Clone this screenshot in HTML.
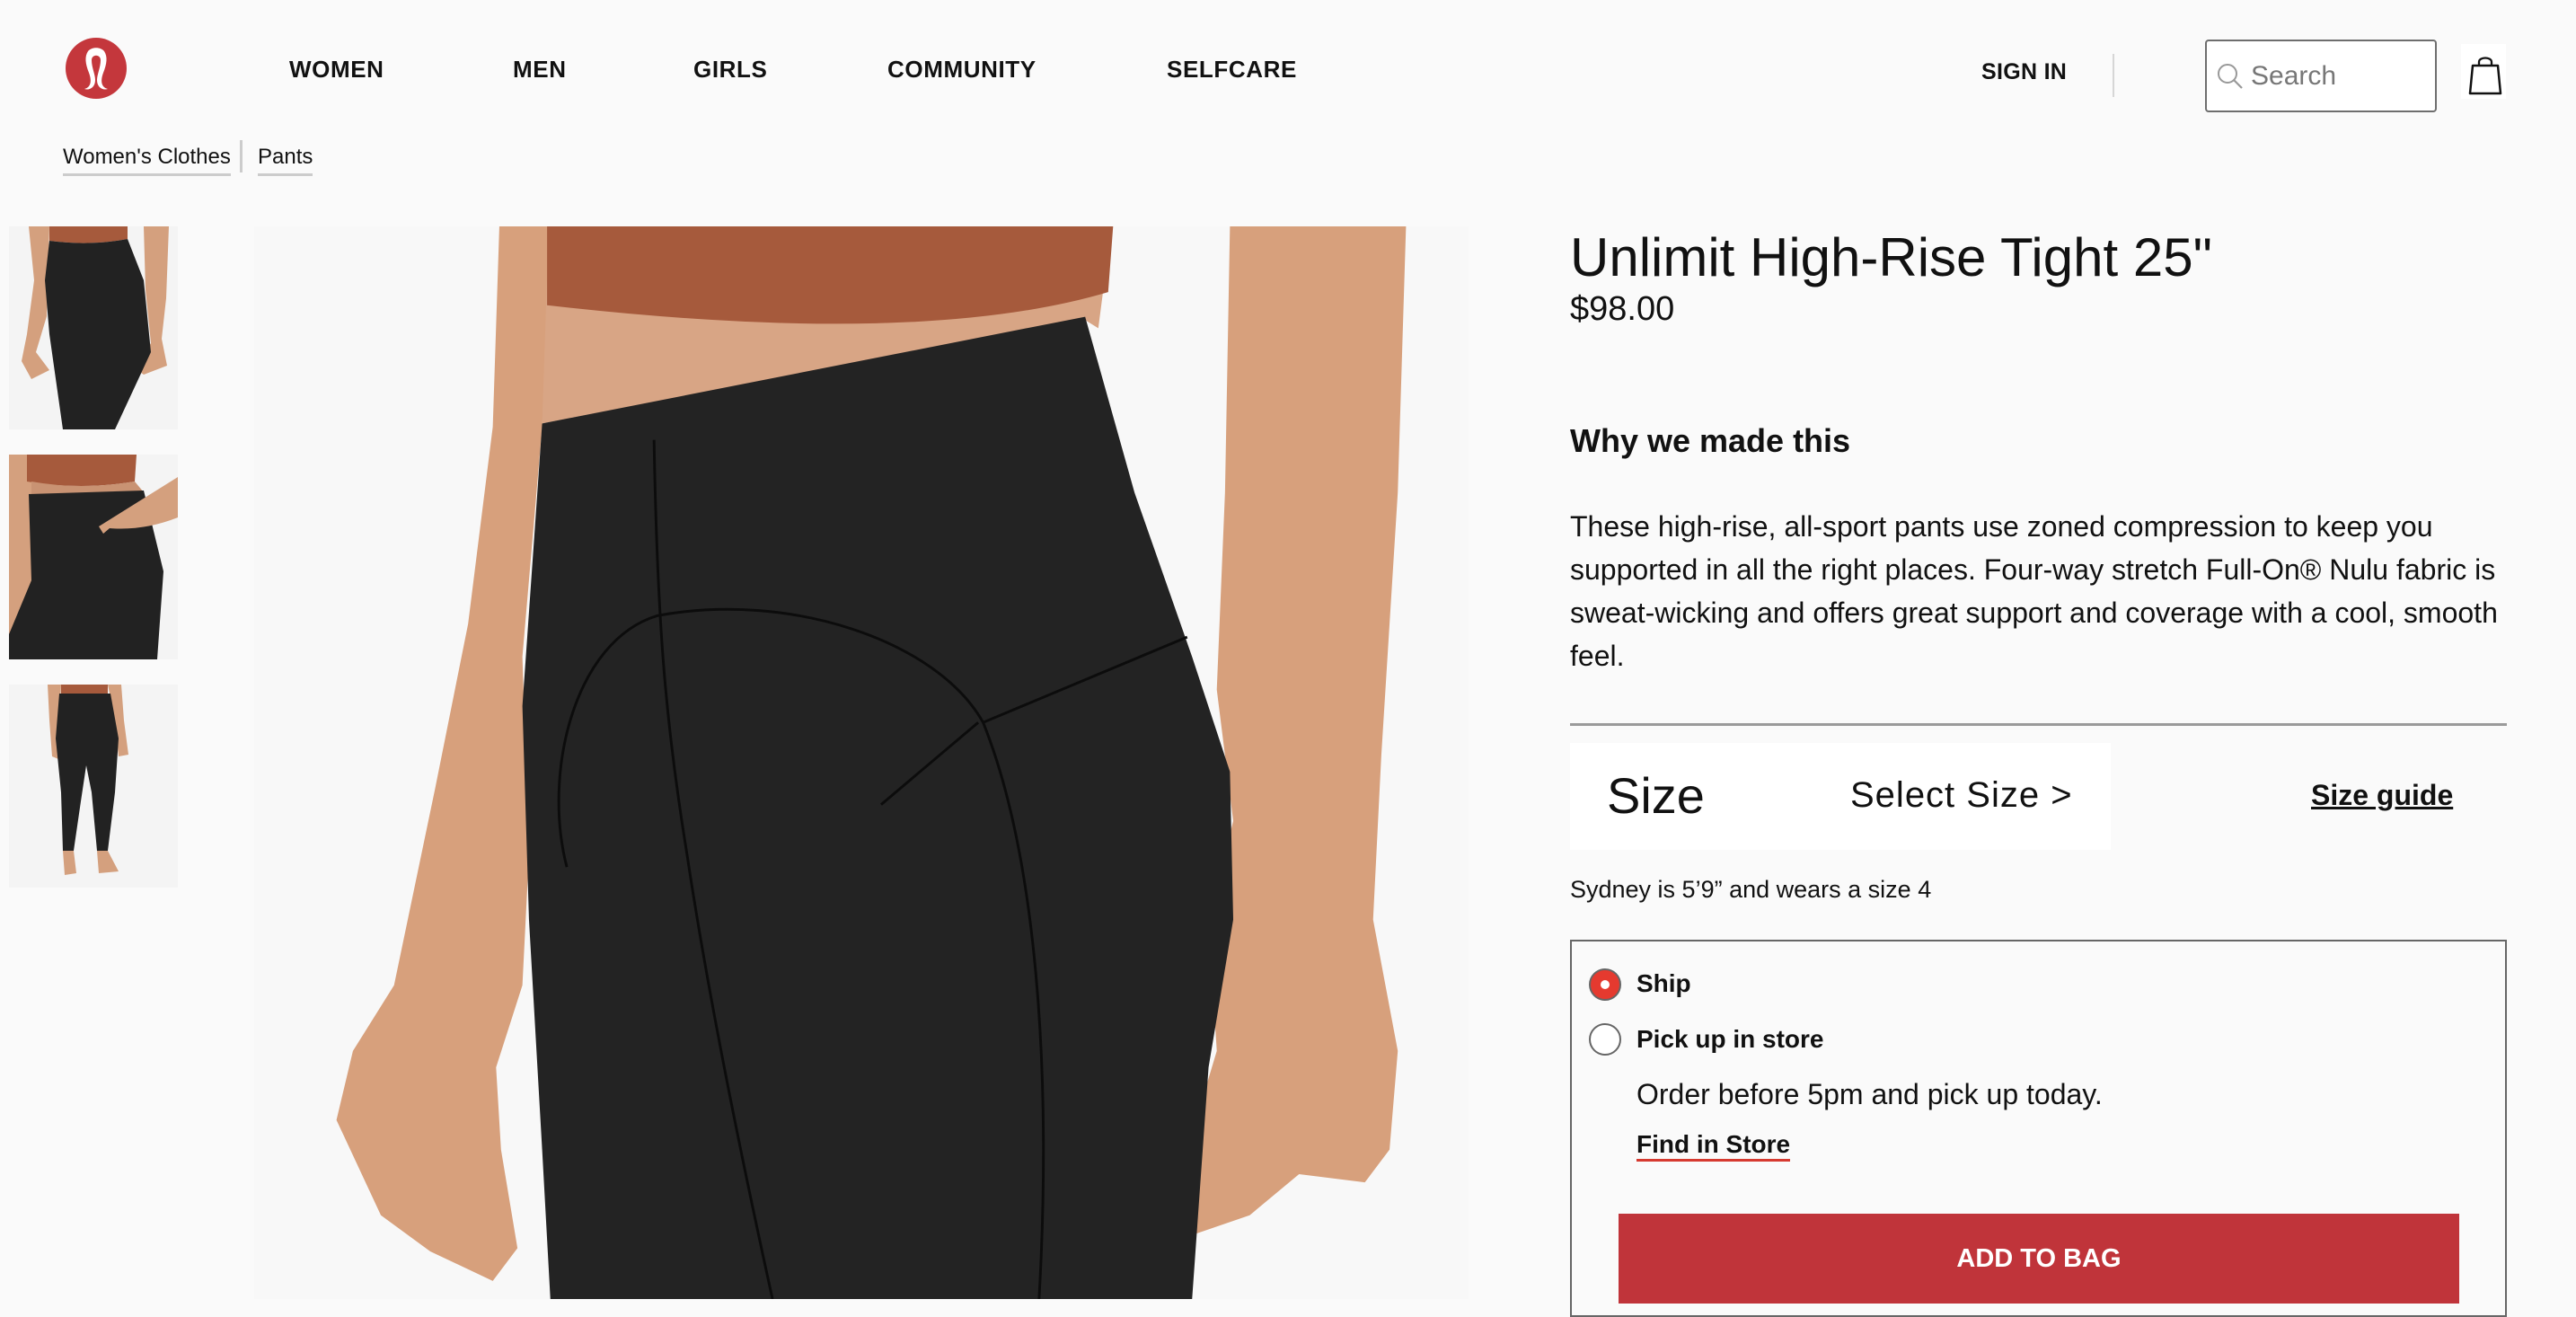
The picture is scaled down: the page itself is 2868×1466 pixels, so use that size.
<!DOCTYPE html>
<html><head><meta charset="utf-8">
<style>
*{margin:0;padding:0;box-sizing:border-box}
html,body{width:2868px;height:1446px;overflow:hidden;background:#fafafa;font-family:"Liberation Sans",Arial,sans-serif;color:#111}
.a{position:absolute;white-space:nowrap;line-height:1}
.nav{font-weight:bold;font-size:26px;letter-spacing:0.6px;top:64px}
.bc{font-size:24px;top:163px;padding-bottom:6px;border-bottom:3px solid #ccc}
</style></head><body>

<svg class="a" style="left:72px;top:41px" width="70" height="70" viewBox="0 0 70 70">
<ellipse cx="35" cy="35" rx="34" ry="34" fill="#c4373c"/>
<path d="M22 58 C30 56 30 48 27 40 C23 30 22 22 26 16 C30 11 40 11 44 16 C48 22 47 30 43 40 C40 48 40 56 48 58 C42 60 36 56 36 48 C36 42 40 34 40 26 C40 19 30 19 30 26 C30 34 34 42 34 48 C34 56 28 60 22 58 Z" fill="#fff"/>
</svg>

<div class="a nav" style="left:322px">WOMEN</div>
<div class="a nav" style="left:571px">MEN</div>
<div class="a nav" style="left:772px">GIRLS</div>
<div class="a nav" style="left:988px">COMMUNITY</div>
<div class="a nav" style="left:1299px">SELFCARE</div>

<div class="a nav" style="left:2206px;top:68px;font-size:25px;letter-spacing:0.3px">SIGN IN</div>
<div class="a" style="left:2352px;top:60px;width:2px;height:48px;background:#d6d6d6"></div>
<div class="a" style="left:2455px;top:44px;width:258px;height:81px;border:2px solid #6e6e6e;border-radius:4px;background:#fff"></div>
<svg class="a" style="left:2466px;top:68px" width="36" height="36" viewBox="0 0 36 36"><circle cx="14" cy="14" r="10" fill="none" stroke="#999" stroke-width="2"/><path d="M21 21 L30 30" stroke="#999" stroke-width="2.2"/></svg>
<div class="a" style="left:2506px;top:70px;font-size:30px;color:#777">Search</div>
<div class="a" style="left:2740px;top:49px;width:50px;height:61px;background:#fff"></div>
<svg class="a" style="left:2745px;top:60px" width="44" height="48" viewBox="0 0 44 48"><path d="M8 13 L36 13 L39 44 L5 44 Z" fill="none" stroke="#111" stroke-width="2.5" stroke-linejoin="round"/><path d="M15 13 V9 C15 3 29 3 29 9 V13" fill="none" stroke="#111" stroke-width="2.3"/></svg>

<div class="a bc" style="left:70px">Women's Clothes</div>
<div class="a" style="left:267px;top:156px;width:3px;height:36px;background:#ccc"></div>
<div class="a bc" style="left:287px">Pants</div>

<svg class="a" style="left:10px;top:252px" width="188" height="226" viewBox="0 0 188 226">
<rect width="188" height="226" fill="#f4f4f4"/>
<path d="M22 0 H45 L42 100 L30 140 L45 160 L25 170 L14 150 L20 120 L28 60 Z" fill="#d4a07e"/>
<path d="M150 0 H178 L175 80 L170 125 L176 155 L150 165 L140 158 L158 130 L152 70 Z" fill="#d4a07e"/>
<path d="M45 0 H132 L132 14 Q90 22 45 16 Z" fill="#a65a3c"/>
<path d="M45 16 Q90 22 132 14 L150 60 L158 140 L118 226 H60 L45 120 L40 60 Z" fill="#222"/>
</svg>
<svg class="a" style="left:10px;top:506px" width="188" height="228" viewBox="0 0 188 228">
<rect width="188" height="228" fill="#f4f4f4"/>
<path d="M0 0 H25 L30 150 L20 190 L0 200 Z" fill="#d4a07e"/>
<path d="M20 0 H142 L140 30 Q80 40 20 30 Z" fill="#a65a3c"/>
<path d="M25 30 Q80 40 140 30 L150 42 L25 45 Z" fill="#c99373"/>
<path d="M22 44 L150 40 L172 130 L165 228 H0 V200 L25 140 Z" fill="#222"/>
<path d="M100 80 Q140 55 188 25 V70 Q150 85 112 82 L105 88 Z" fill="#d4a07e"/>
</svg>
<svg class="a" style="left:10px;top:762px" width="188" height="226" viewBox="0 0 188 226">
<rect width="188" height="226" fill="#f4f4f4"/>
<path d="M43 0 H58 L55 70 L60 85 L48 80 L45 40 Z" fill="#d4a07e"/>
<path d="M110 0 H125 L128 40 L133 78 L122 80 L118 40 Z" fill="#d4a07e"/>
<path d="M58 0 H110 V10 H58 Z" fill="#a65a3c"/>
<path d="M56 10 H113 L122 60 L118 120 L110 185 L98 185 L92 120 L86 90 L80 130 L72 185 L60 185 L58 120 L52 60 Z" fill="#222"/>
<path d="M60 185 H72 L75 210 L62 212 Z M98 185 H110 L122 208 L100 210 Z" fill="#d4a07e"/>
</svg>

<svg class="a" style="left:283px;top:252px" width="1352" height="1194" viewBox="155 138 738 653" preserveAspectRatio="none">
<rect x="155" y="138" width="738" height="653" fill="#f8f8f8"/>
<path d="M304 138 L336 138 L330 260 L318 400 L322 520 L318 600 L302 650 L305 700 L315 760 L300 780 L262 762 L232 740 L205 682 L215 640 L240 600 L265 480 L285 380 L300 260 Z" fill="#d7a07c"/>
<path d="M748 138 L855 138 L850 300 L840 460 L835 560 L850 640 L845 700 L830 720 L790 715 L760 740 L725 752 L700 750 L722 700 L740 640 L735 560 L750 500 L740 420 L745 300 Z" fill="#d7a07c"/>
<path d="M334 138 L676 138 L668 200 L660 195 L330 258 Z" fill="#d8a585"/>
<path d="M333 138 L677 138 L674 178 Q560 212 333 186 Z" fill="#a65a3c"/>
<path d="M330 258 L660 193 L690 300 L725 400 L748 470 L750 560 L735 650 L725 791 L335 791 L330 700 L322 560 L318 430 L325 330 Z" fill="#232323"/>
<g fill="none" stroke="#0c0c0c" stroke-width="1.6">
<path d="M398 268 C400 380 405 440 418 520 C430 600 450 700 470 791"/>
<path d="M345 528 C330 470 350 390 400 375 C480 360 570 390 598 440"/>
<path d="M598 440 L722 388"/>
<path d="M598 440 C630 520 640 650 632 791"/>
<path d="M536 490 L595 440"/>
</g>
</svg>

<div class="a" style="left:1748px;top:257px;font-size:60px">Unlimit High-Rise Tight 25"</div>
<div class="a" style="left:1748px;top:325px;font-size:38px">$98.00</div>
<div class="a" style="left:1748px;top:473px;font-size:36px;font-weight:bold">Why we made this</div>
<div class="a" style="left:1748px;top:562px;font-size:32px;line-height:48px;white-space:normal;width:1060px">These high-rise, all-sport pants use zoned compression to keep you supported in all the right places. Four-way stretch Full-On® Nulu fabric is sweat-wicking and offers great support and coverage with a cool, smooth feel.</div>
<div class="a" style="left:1748px;top:805px;width:1043px;height:3px;background:#9a9a9a"></div>
<div class="a" style="left:1748px;top:827px;width:602px;height:119px;background:#fff"></div>
<div class="a" style="left:1789px;top:858px;font-size:56px">Size</div>
<div class="a" style="left:2060px;top:865px;font-size:40px;letter-spacing:1px">Select Size &gt;</div>
<div class="a" style="left:2573px;top:869px;font-size:32px;font-weight:bold;text-decoration:underline">Size guide</div>
<div class="a" style="left:1748px;top:977px;font-size:27px">Sydney is 5’9” and wears a size 4</div>
<div class="a" style="left:1748px;top:1046px;width:1043px;height:420px;border:2px solid #666"></div>
<div class="a" style="left:1769px;top:1078px;width:36px;height:36px;border-radius:50%;background:#e53a2f;border:2px solid #666"></div>
<div class="a" style="left:1782px;top:1091px;width:10px;height:10px;border-radius:50%;background:#fff"></div>
<div class="a" style="left:1822px;top:1081px;font-size:28px;font-weight:bold">Ship</div>
<div class="a" style="left:1769px;top:1139px;width:36px;height:36px;border-radius:50%;background:#fff;border:2px solid #666"></div>
<div class="a" style="left:1822px;top:1143px;font-size:28px;font-weight:bold">Pick up in store</div>
<div class="a" style="left:1822px;top:1202px;font-size:32px">Order before 5pm and pick up today.</div>
<div class="a" style="left:1822px;top:1260px;font-size:28px;font-weight:bold;padding-bottom:2px;border-bottom:3px solid #d63a30">Find in Store</div>
<div class="a" style="left:1802px;top:1351px;width:936px;height:100px;background:#c0343a"></div>
<div class="a" style="left:1802px;top:1387px;width:936px;text-align:center;font-size:29px;font-weight:bold;color:#fff">ADD TO BAG</div>
</body></html>
